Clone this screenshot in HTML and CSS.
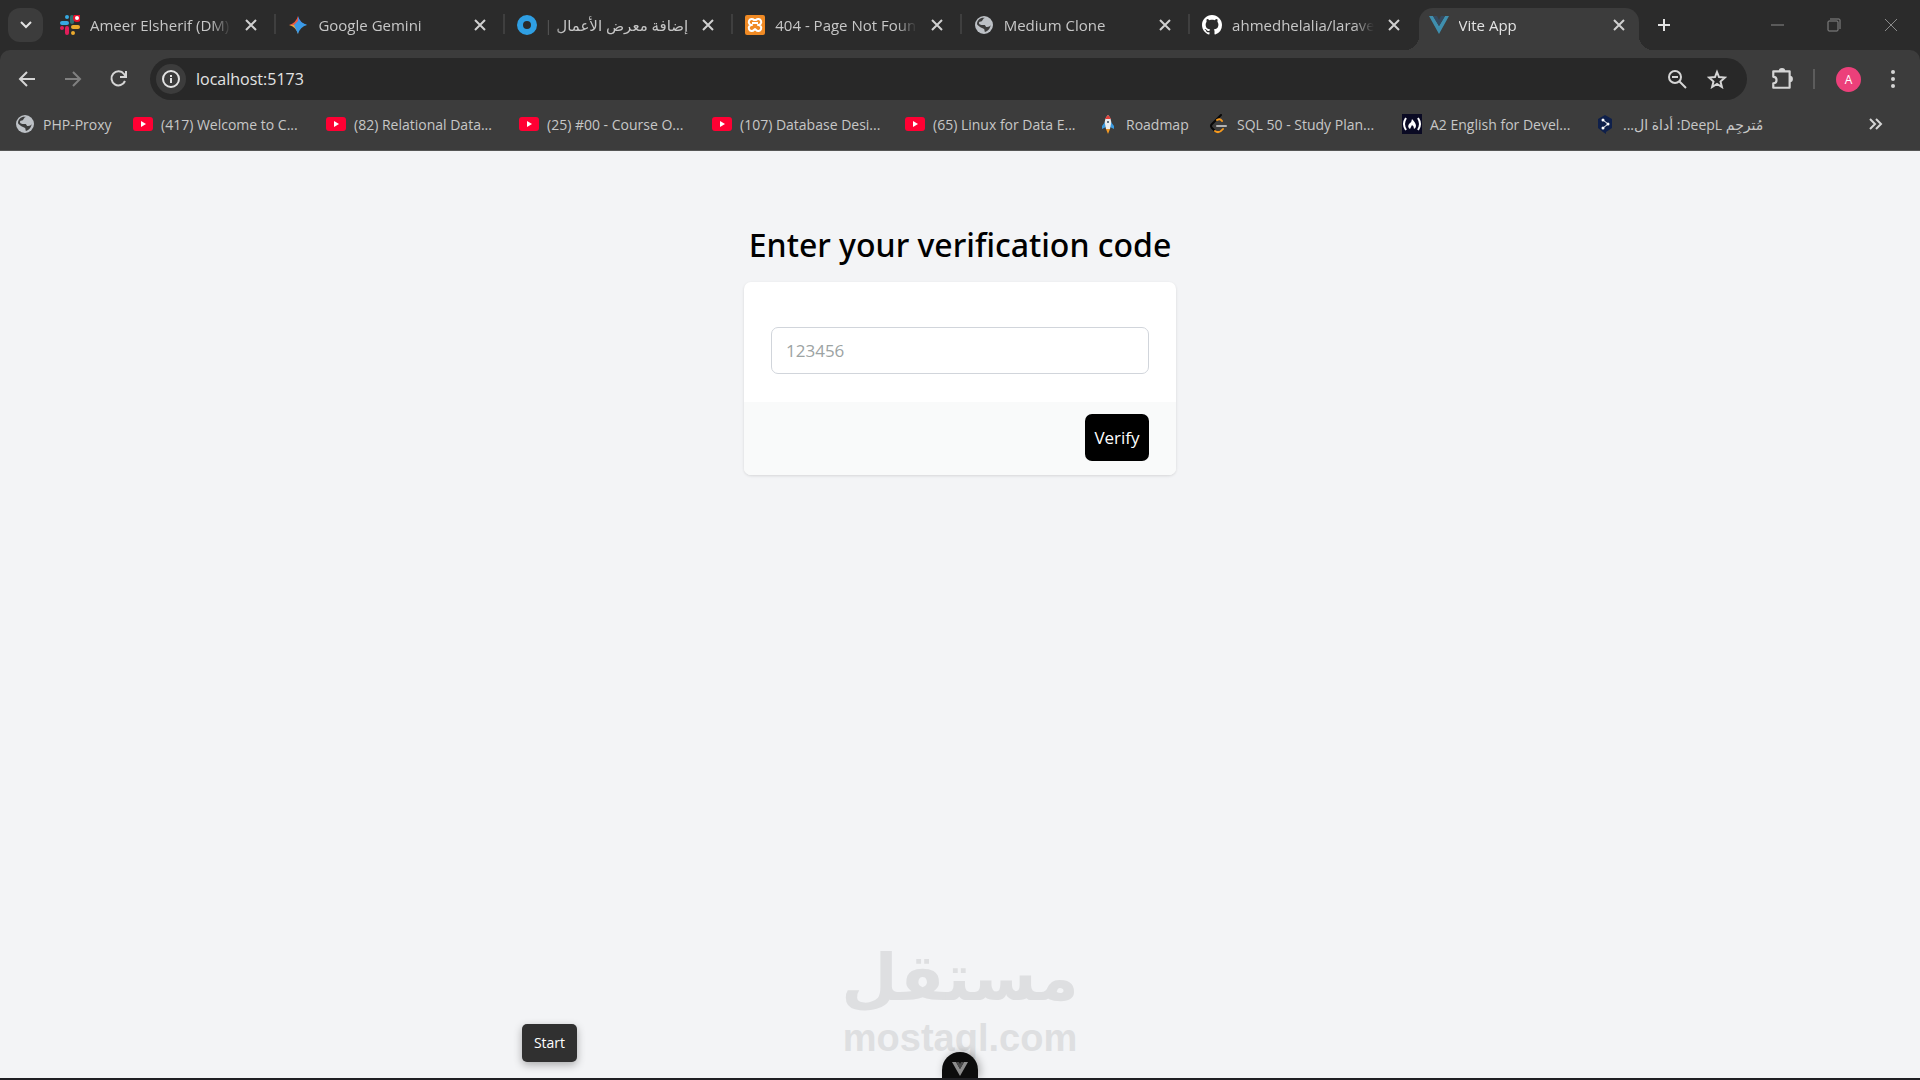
FILE: index.html
```
<!DOCTYPE html>
<html lang="en">

<head>
    <meta charset="UTF-8">
    <meta name="viewport" content="width=device-width, initial-scale=1.0">
    <title>Vite App</title>
    <link rel="stylesheet" href="styles.css">
</head>

<body>
    <!-- Shared icons -->
    <svg class="sprite" aria-hidden="true">
        <symbol id="close" viewBox="0 0 20 20">
            <path d="M5 5l10 10M15 5L5 15" fill="none" stroke="currentColor" stroke-width="2" />
        </symbol>
        <symbol id="globe" viewBox="0 0 20 20">
            <circle cx="10" cy="10" r="9" fill="#bdc1c6" />
            <path d="M11 3c-2 0-2 2-3 3s-3 0-3 2 3 2 5 2 1 2 3 2 4-1 4-3c-1 5-3 7-6 8-1-1 0-2-1-3S7 13 6 12s-3-2-3-3c0-4 4-7 8-6z" fill="#3c3c3c" />
        </symbol>
        <symbol id="youtube" viewBox="0 0 20 20">
            <rect y="3" width="20" height="14" rx="3" fill="#ff0033" />
            <path d="M8 7l5 3-5 3z" fill="#fff" />
        </symbol>
    </svg>

    <header class="browser">
        <div class="tab-strip">
            <button class="tab-search" aria-label="Search tabs">
                <svg class="icon" viewBox="0 0 20 20"><path d="M5 7l5 5 5-5" fill="none" stroke="#e3e3e3" stroke-width="2" /></svg>
            </button>
            <div class="tabs">
                <div class="tab">
                    <svg class="icon" viewBox="0 0 20 20">
                        <g stroke-width="4" stroke-linecap="round">
                            <path d="M2 8h5M7 2v0" stroke="#36a9e1" />
                            <path d="M12 2v5" stroke="#2f6f70" />
                            <path d="M13 12h5M13 18v0" stroke="#ecab2e" />
                            <path d="M7 13v5M2 13v0" stroke="#e01e5a" />
                        </g>
                        <circle cx="17" cy="3" r="3" fill="#fff" stroke="#e8112d" stroke-width="2" />
                    </svg>
                    <span class="tab-title">Ameer Elsherif (DM) -</span>
                    <button class="tab-close" aria-label="Close tab"><svg class="icon"><use href="#close" /></svg></button>
                </div>
                <div class="tab">
                    <svg class="icon" viewBox="0 0 20 20">
                        <path d="M10 1Q12 8 19 10H10z" fill="#4b8ee8" />
                        <path d="M10 1Q8 8 1 10H10z" fill="#ea5a43" />
                        <path d="M1 10Q8 12 10 19V10z" fill="#eba13a" />
                        <path d="M19 10Q12 12 10 19L6 10l4-4z" fill="#3a9be8" />
                    </svg>
                    <span class="tab-title">Google Gemini</span>
                    <button class="tab-close" aria-label="Close tab"><svg class="icon"><use href="#close" /></svg></button>
                </div>
                <div class="tab">
                    <svg class="icon" viewBox="0 0 20 20"><circle cx="10" cy="10" r="7" fill="none" stroke="#2f9fe3" stroke-width="6" /></svg>
                    <span class="tab-title rtl" dir="rtl">إضافة معرض الأعمال |</span>
                    <button class="tab-close" aria-label="Close tab"><svg class="icon"><use href="#close" /></svg></button>
                </div>
                <div class="tab">
                    <svg class="icon" viewBox="0 0 20 20">
                        <rect width="20" height="20" rx="2" fill="#f08a24" />
                        <path d="M7 10a3 3 0 1 1 2-5h2a3 3 0 1 1 2 5 3 3 0 1 1-2 5q-1-2-2 0a3 3 0 1 1-2-5zM7 8h6" fill="none" stroke="#fff" stroke-width="2" stroke-linejoin="round" />
                    </svg>
                    <span class="tab-title">404 - Page Not Found</span>
                    <button class="tab-close" aria-label="Close tab"><svg class="icon"><use href="#close" /></svg></button>
                </div>
                <div class="tab">
                    <svg class="icon"><use href="#globe" /></svg>
                    <span class="tab-title">Medium Clone</span>
                    <button class="tab-close" aria-label="Close tab"><svg class="icon"><use href="#close" /></svg></button>
                </div>
                <div class="tab">
                    <svg class="icon" viewBox="0 0 16 16">
                        <path fill="#fff" d="M8 0C3.58 0 0 3.58 0 8c0 3.54 2.29 6.53 5.47 7.59.4.07.55-.17.55-.38 0-.19-.01-.82-.01-1.49-2.01.37-2.53-.49-2.69-.94-.09-.23-.48-.94-.82-1.13-.28-.15-.68-.52-.01-.53.63-.01 1.08.58 1.23.82.72 1.21 1.87.87 2.33.66.07-.52.28-.87.51-1.07-1.78-.2-3.64-.89-3.64-3.95 0-.87.31-1.59.82-2.15-.08-.2-.36-1.02.08-2.12 0 0 .67-.21 2.2.82.64-.18 1.32-.27 2-.27s1.36.09 2 .27c1.53-1.04 2.2-.82 2.2-.82.44 1.1.16 1.92.08 2.12.51.56.82 1.27.82 2.15 0 3.07-1.87 3.75-3.65 3.95.29.25.54.73.54 1.48 0 1.07-.01 1.93-.01 2.2 0 .21.15.46.55.38A8.01 8.01 0 0 0 16 8c0-4.42-3.58-8-8-8z" />
                    </svg>
                    <span class="tab-title">ahmedhelalia/laravel-</span>
                    <button class="tab-close" aria-label="Close tab"><svg class="icon"><use href="#close" /></svg></button>
                </div>
                <div class="tab active">
                    <svg class="icon" viewBox="0 0 20 20">
                        <path d="M0 1h4l6 10 6-10h4L10 19z" fill="#3f8fae" />
                        <path d="M4 1h4l2 4 2-4h4l-6 10z" fill="#35495e" />
                    </svg>
                    <span class="tab-title">Vite App</span>
                    <button class="tab-close" aria-label="Close tab"><svg class="icon"><use href="#close" /></svg></button>
                </div>
            </div>
            <button class="new-tab" aria-label="New tab">
                <svg class="icon" viewBox="0 0 20 20"><path d="M10 4v12M4 10h12" stroke="#e3e3e3" stroke-width="2" /></svg>
            </button>
            <div class="window-controls">
                <button aria-label="Minimize"><svg class="icon" viewBox="0 0 20 20"><path d="M4 10h13" stroke="#8a8a8a" /></svg></button>
                <button aria-label="Restore">
                    <svg class="icon" viewBox="0 0 20 20" fill="none" stroke="#8a8a8a">
                        <rect x="4" y="6" width="10" height="10" rx="1" />
                        <path d="M6 4h9q1 0 1 1v9" />
                    </svg>
                </button>
                <button aria-label="Close"><svg class="icon" viewBox="0 0 20 20"><path d="M4 4l12 12M16 4L4 16" stroke="#8a8a8a" /></svg></button>
            </div>
        </div>

        <div class="toolbar">
            <div class="nav-buttons">
                <button aria-label="Back"><svg class="icon" viewBox="0 0 20 20" fill="none" stroke="#d5d5d5" stroke-width="2"><path d="M18 10H4M10 3l-7 7 7 7" /></svg></button>
                <button aria-label="Forward"><svg class="icon" viewBox="0 0 20 20" fill="none" stroke="#808080" stroke-width="2"><path d="M2 10h14M10 3l7 7-7 7" /></svg></button>
                <button aria-label="Reload">
                    <svg class="icon" viewBox="0 0 20 20">
                        <path d="M16 12a7 7 0 1 1-1-7l2 3" fill="none" stroke="#d5d5d5" stroke-width="2" />
                        <path d="M18 2v7h-7V7h5V2z" fill="#d5d5d5" />
                    </svg>
                </button>
            </div>
            <div class="omnibox">
                <button class="site-info" aria-label="View site information">
                    <svg class="icon" viewBox="0 0 20 20" fill="none" stroke="#e3e3e3" stroke-width="2"><circle cx="10" cy="10" r="8" /><path d="M10 9v5M10 6v2" /></svg>
                </button>
                <input class="address" type="text" value="localhost:5173" aria-label="Address">
                <button aria-label="Zoom">
                    <svg class="icon" viewBox="0 0 20 20" fill="none" stroke="#d5d5d5" stroke-width="2"><circle cx="8" cy="8" r="6" /><path d="M12 12l7 7M5 8h6" /></svg>
                </button>
                <button aria-label="Bookmark this tab">
                    <svg class="icon" viewBox="0 0 20 20" fill="none" stroke="#d5d5d5" stroke-width="2"><path d="M10 3l2 5 6 .5-4.500 4 1.400 5.500-4.900-3-4.900 3 1.400-5.500L2 8.500 8 8z" /></svg>
                </button>
            </div>
            <div class="toolbar-end">
                <button aria-label="Extensions">
                    <svg class="icon large" viewBox="0 0 22 22"><path d="M3 4h15v15H3v-4q3 0 3-3t-3-3z" fill="none" stroke="#d5d5d5" stroke-width="2" stroke-linejoin="round" /><path d="M8 4a3 3 0 0 1 6 0zM18 8a3 3 0 0 1 0 6z" fill="#d5d5d5" /></svg>
                </button>
                <span class="divider"></span>
                <button class="avatar" aria-label="Profile">A</button>
                <button aria-label="Menu">
                    <svg class="icon" viewBox="0 0 20 20" fill="#d5d5d5"><circle cx="10" cy="3" r="2" /><circle cx="10" cy="10" r="2" /><circle cx="10" cy="17" r="2" /></svg>
                </button>
            </div>
        </div>

        <nav class="bookmarks">
            <a class="bookmark php" href="#"><svg class="icon"><use href="#globe" /></svg><span>PHP-Proxy</span></a>
            <a class="bookmark" href="#"><svg class="icon"><use href="#youtube" /></svg><span>(417) Welcome to C...</span></a>
            <a class="bookmark" href="#"><svg class="icon"><use href="#youtube" /></svg><span>(82) Relational Data...</span></a>
            <a class="bookmark" href="#"><svg class="icon"><use href="#youtube" /></svg><span>(25) #00 - Course O...</span></a>
            <a class="bookmark" href="#"><svg class="icon"><use href="#youtube" /></svg><span>(107) Database Desi...</span></a>
            <a class="bookmark" href="#"><svg class="icon"><use href="#youtube" /></svg><span>(65) Linux for Data E...</span></a>
            <a class="bookmark roadmap" href="#">
                <svg class="icon" viewBox="0 0 20 20">
                    <path d="M7 8l-3 4v3l4-2zM13 8l3 4v3l-4-2z" fill="#3b9be0" />
                    <path d="M10 1q4 4 3 9l-1 5H8l-1-5q-1-5 3-9z" fill="#e8edf0" />
                    <path d="M10 1q2 2 3 4H7q1-2 3-4z" fill="#e2403a" />
                    <circle cx="10" cy="8" r="1" fill="#35495e" />
                    <path d="M8 15h4l-2 5z" fill="#f59a23" />
                </svg>
                <span>Roadmap</span>
            </a>
            <a class="bookmark" href="#">
                <svg class="icon" viewBox="0 0 20 20" fill="none" stroke-width="2" stroke-linecap="round">
                    <path d="M12 1L3 10q-2 2 0 4l3 3" stroke="#080808" />
                    <path d="M8 6q3-2 5 1M6 17q4 3 8-2" stroke="#f79a1e" />
                    <path d="M8 12h9" stroke="#b3b3b3" />
                </svg>
                <span>SQL 50 - Study Plan...</span>
            </a>
            <a class="bookmark" href="#">
                <svg class="icon" viewBox="0 0 20 20">
                    <rect width="20" height="20" fill="#0a0a23" />
                    <path d="M4 4q-4 6 0 12M16 4q4 6 0 12" fill="none" stroke="#fff" stroke-width="2" />
                    <path d="M10 5q4 4 4 7 0 2-2 3 0-3-2-4-1 2-2 4-3-2-1-5 3-2 3-5z" fill="#fff" />
                </svg>
                <span>A2 English for Devel...</span>
            </a>
            <a class="bookmark" href="#">
                <svg class="icon" viewBox="0 0 20 20">
                    <path d="M10 1l7 4v9l-6 4v2l-3-2-5-4V5z" fill="#0f204b" />
                    <path d="M8 6l5 4-5 4" fill="none" stroke="#fff" />
                    <g fill="#fff"><circle cx="8" cy="6" r="1.500" /><circle cx="13" cy="10" r="1.500" /><circle cx="8" cy="14" r="1.500" /></g>
                </svg>
                <span dir="rtl">مُترجِم DeepL: أداة ال...</span>
            </a>
            <button class="more" aria-label="More bookmarks">
                <svg class="icon" viewBox="0 0 20 20"><path d="M5 5l5 5-5 5M11 5l5 5-5 5" fill="none" stroke="#d5d5d5" stroke-width="2" /></svg>
            </button>
        </nav>
    </header>

    <main class="page">
        <h1>Enter your verification code</h1>
        <form class="card" action="#">
            <div class="card-body">
                <input type="text" id="code" name="code" placeholder="123456" aria-label="Verification code">
            </div>
            <div class="card-footer">
                <button type="submit" class="verify">Verify</button>
            </div>
        </form>
    </main>

    <div class="watermark">
        <span class="watermark-ar" lang="ar" dir="rtl">مستقل</span>
        <span class="watermark-en">mostaql.com</span>
    </div>
    <button class="start">Start</button>
    <button class="devtools" aria-label="Toggle Vue DevTools">
        <svg class="icon" viewBox="0 0 20 20">
            <path d="M2 3h4l4 7 4-7h4l-8 14z" fill="#8d8d8d" />
            <path d="M6 3h3l1 2 1-2h3l-4 7z" fill="#4a4a4a" />
        </svg>
    </button>
    <div class="bottom-edge"></div>
</body>

</html>
```
FILE: styles.css
```
* {
    box-sizing: border-box;
}

body {
    margin: 0;
    min-height: 100vh;
    background-color: #f3f4f6;
    font-family: "Open Sans", "Noto Sans", "DejaVu Sans", sans-serif;
    overflow: hidden;
}

button {
    display: flex;
    align-items: center;
    justify-content: center;
    padding: 0;
    border: none;
    background: none;
    font-family: inherit;
    cursor: pointer;
}

.sprite {
    display: none;
}

.icon {
    display: block;
    flex: none;
    width: 20px;
    height: 20px;
}

.icon.large {
    width: 24px;
    height: 24px;
}

/* Browser frame */
.browser {
    background-color: #2b2b2b;
    color: #c7c7c7;
    font-size: 15px;
}

.tab-strip {
    display: flex;
    align-items: center;
    height: 50px;
    padding-left: 8px;
}

.tab-search {
    width: 35px;
    height: 34px;
    border-radius: 12px;
    background-color: #3c3c3c;
}

.tabs {
    display: flex;
    align-self: stretch;
    flex: 0 1 1591px;
    margin-left: 5px;
}

.tab {
    position: relative;
    display: flex;
    align-items: center;
    flex: 1 1 228px;
    min-width: 0;
    gap: 10px;
    padding: 0 15px 0 12px;
}

.tab:not(.active)::after {
    content: "";
    position: absolute;
    right: 0;
    top: 14px;
    width: 2px;
    height: 20px;
    background-color: #3f3f3f;
}

.tab:nth-last-child(2)::after {
    display: none;
}

.tab-title {
    flex: 1;
    overflow: hidden;
    white-space: nowrap;
    -webkit-mask-image: linear-gradient(to left, transparent, #000 20px);
    mask-image: linear-gradient(to left, transparent, #000 20px);
}

.tab-title.rtl {
    margin-left: -4px;
    -webkit-mask-image: linear-gradient(to right, transparent, #000 20px);
    mask-image: linear-gradient(to right, transparent, #000 20px);
}

.tab-close {
    color: #d0d0d0;
}

.tab.active {
    flex-basis: 220px;
    margin-top: 8px;
    padding: 0 10px 8px;
    border-radius: 14px 14px 0 0;
    background-color: #3c3c3c;
    color: #e3e3e3;
}

.tab.active::before,
.tab.active::after {
    content: "";
    position: absolute;
    bottom: 0;
    width: 14px;
    height: 14px;
}

.tab.active::before {
    left: -14px;
    background: radial-gradient(circle at 0 0, transparent 14px, #3c3c3c 14px);
}

.tab.active::after {
    top: auto;
    right: -14px;
    background: radial-gradient(circle at 100% 0, transparent 14px, #3c3c3c 14px);
}

.new-tab {
    width: 34px;
    height: 34px;
    margin-left: 8px;
}

.window-controls {
    display: flex;
    margin-left: auto;
    padding-right: 1px;
}

.window-controls button {
    width: 57px;
    height: 48px;
}

.toolbar {
    display: flex;
    align-items: center;
    height: 58px;
    padding: 0 11px 0 4px;
    border-radius: 10px 10px 0 0;
    background-color: #3c3c3c;
}

.nav-buttons {
    display: flex;
    width: 146px;
}

.nav-buttons button {
    width: 46px;
    height: 40px;
}

.omnibox {
    display: flex;
    align-items: center;
    flex: 1;
    height: 42px;
    padding: 0 10px 0 6px;
    border-radius: 21px;
    background-color: #282828;
}

.omnibox button {
    width: 40px;
    height: 40px;
}

.omnibox .site-info {
    width: 30px;
    height: 30px;
    border-radius: 50%;
    background-color: #3c3c3c;
}

.address {
    flex: 1;
    min-width: 0;
    padding: 0 10px;
    border: none;
    outline: none;
    background: none;
    color: #e3e3e3;
    font-family: inherit;
    font-size: 16px;
}

.toolbar-end {
    display: flex;
    align-items: center;
    width: 162px;
    padding-left: 15px;
}

.toolbar-end button {
    flex: none;
    width: 40px;
    height: 40px;
}

.divider {
    flex: none;
    width: 2px;
    height: 20px;
    margin: 0 21px 0 11px;
    background-color: #5c5c5c;
}

.toolbar-end .avatar {
    width: 25px;
    height: 25px;
    margin-right: 12px;
    border-radius: 50%;
    background-color: #ec407a;
    color: #fff;
    font-size: 12px;
}

.bookmarks {
    display: flex;
    align-items: center;
    gap: 20px;
    height: 43px;
    padding: 0 35px 10px 15px;
    border-bottom: 1px solid #555;
    background-color: #3c3c3c;
}

.bookmark {
    display: flex;
    align-items: center;
    flex: 0 1 173px;
    gap: 8px;
    min-width: 0;
    color: #c7c7c7;
    font-size: 14px;
    text-decoration: none;
    white-space: nowrap;
}

.bookmark.php {
    flex-basis: 98px;
}

.bookmark.roadmap {
    flex-basis: 91px;
}

.more {
    margin-left: auto;
}

/* Verification form */
.page {
    display: flex;
    flex-direction: column;
    align-items: center;
    padding: 71px 16px 0;
}

h1 {
    margin: 0 0 15px;
    font-family: "Noto Sans", "Open Sans", sans-serif;
    font-size: 32px;
    font-weight: 500;
    line-height: 45px;
    color: #000;
}

.card {
    width: 100%;
    max-width: 432px;
    overflow: hidden;
    border-radius: 7px;
    background-color: #fff;
    box-shadow: 0 1px 3px rgba(0, 0, 0, 0.12);
}

.card-body {
    padding: 45px 27px 28px;
}

.card-body input {
    display: block;
    width: 100%;
    height: 47px;
    padding: 0 14px;
    border: 1px solid #d1d5db;
    border-radius: 7px;
    font-family: inherit;
    font-size: 17px;
}

.card-body input::placeholder {
    color: #9ca3a3;
}

.card-footer {
    display: flex;
    justify-content: flex-end;
    padding: 12px 27px 14px;
    background-color: #f9fafa;
}

.verify {
    width: 64px;
    height: 47px;
    border-radius: 7px;
    background-color: #000;
    color: #fff;
    font-size: 17px;
}

/* Floating items over the page */
.watermark {
    position: absolute;
    left: 50%;
    bottom: 20px;
    display: flex;
    flex-direction: column;
    align-items: center;
    transform: translateX(-50%);
    color: #dedfe1;
    font-weight: 700;
}

.watermark-ar {
    font-family: "DejaVu Sans", sans-serif;
    font-size: 65px;
    line-height: 76px;
}

.watermark-en {
    font-family: "Liberation Sans", sans-serif;
    font-size: 38px;
    line-height: 44px;
}

.start {
    position: absolute;
    left: 522px;
    bottom: 18px;
    width: 55px;
    height: 38px;
    padding-bottom: 1px;
    border-radius: 5px;
    background-color: #303030;
    box-shadow: 0 3px 8px rgba(0, 0, 0, 0.3);
    color: #fff;
    font-size: 14px;
}

.devtools {
    position: absolute;
    left: 50%;
    bottom: 2px;
    width: 36px;
    height: 26px;
    padding-top: 8px;
    border-radius: 18px 18px 0 0;
    background-color: #0c0c0c;
    box-shadow: 2px 0 8px rgba(0, 0, 0, 0.3);
    transform: translateX(-50%);
}

.bottom-edge {
    position: absolute;
    left: 0;
    right: 0;
    bottom: 0;
    height: 2px;
    background-color: #1f1f23;
}
```
